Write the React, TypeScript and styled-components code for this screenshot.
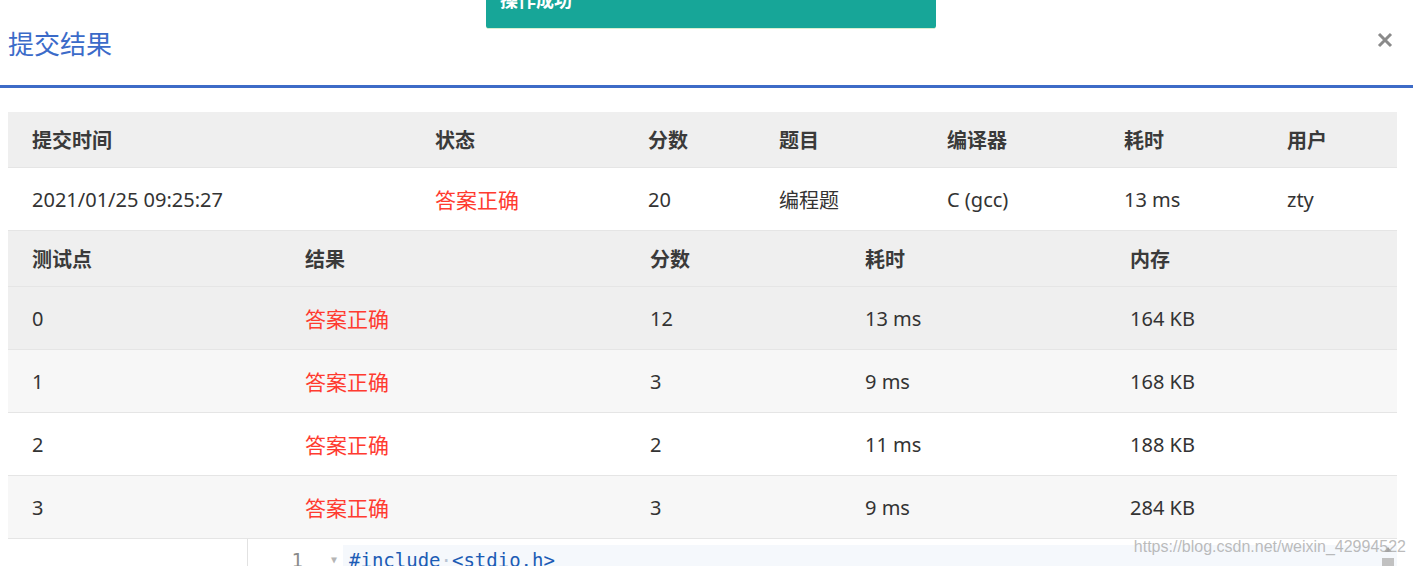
import React from "react";
import styled, { createGlobalStyle } from "styled-components";

const Global = createGlobalStyle`
  html, body { margin: 0; padding: 0; background: #fff; overflow: hidden; }
  body { font-family: "Noto Sans", "Noto Sans CJK SC", sans-serif; color: #333; }
  * { box-sizing: border-box; }
`;

const Page = styled.div`
  position: relative;
  width: 1413px;
  height: 566px;
  overflow: hidden;
`;

const Header = styled.header`
  height: 88px;
  border-bottom: 3px solid #3d6bc7;
  display: flex;
  align-items: center;
  justify-content: space-between;
  padding: 0 20px 0 8px;
`;

const Title = styled.h1`
  margin: 0;
  font-family: "Noto Sans CJK SC", sans-serif;
  font-size: 26px;
  font-weight: 400;
  color: #3b6bc9;
`;

const Close = styled.button`
  border: 0;
  background: none;
  padding: 0;
  margin-bottom: 6px;
  display: flex;
  cursor: pointer;
`;

const Toast = styled.div`
  position: absolute;
  top: 0;
  left: 486px;
  width: 450px;
  height: 29px;
  background: #17a698;
  border-bottom: 1px solid #d8efcf;
  border-radius: 0 0 3px 3px;
  display: flex;
  align-items: flex-end;
  padding: 0 0 20px 14px;
  color: #fff;
  font-family: "Noto Sans CJK SC", sans-serif;
  font-weight: 700;
  font-size: 18px;
  line-height: 18px;
`;

const Content = styled.main`
  padding: 24px 16px 0 8px;
`;

const Row = styled.div<{ $cols: string; $bg?: string; $head?: boolean }>`
  display: grid;
  grid-template-columns: ${(p) => p.$cols};
  height: ${(p) => (p.$head ? "56px" : "63px")};
  background: ${(p) => p.$bg ?? "#fff"};
  border-bottom: 1px solid #e5e5e5;
  font-size: 20px;
  font-weight: ${(p) => (p.$head ? 700 : 400)};
  color: ${(p) => (p.$head ? "#3a3a3a" : "#333")};
`;

const Cell = styled.div<{ $ok?: boolean }>`
  display: flex;
  align-items: center;
  padding-left: 24px;
  white-space: nowrap;
  color: ${(p) => (p.$ok ? "#ff3b30" : "inherit")};
  font-size: ${(p) => (p.$ok ? "21px" : "inherit")};
`;

const Editor = styled.div`
  position: relative;
  margin-left: 239px;
  border-left: 1px solid #e2e2e2;
  padding-top: 6px;
  height: 60px;
  display: flex;
`;

const Gutter = styled.div`
  width: 95px;
  display: flex;
  align-items: flex-start;
  padding-top: 2px;
  font-family: "DejaVu Sans Mono", monospace;
  font-size: 19px;
  line-height: 26px;
  color: #8a8a8a;
`;

const LineNo = styled.span`
  width: 55px;
  text-align: right;
`;

const Fold = styled.span`
  margin-left: 28px;
  font-size: 10px;
  color: #b5b5b5;
`;

const CodeArea = styled.div`
  flex: 1;
  background: #f5f8fc;
  padding: 2px 0 0 6px;
  font-family: "DejaVu Sans Mono", monospace;
  font-size: 19px;
  line-height: 26px;
  color: #1c5cb5;
  white-space: pre;
`;

const Dot = styled.span`
  color: #b8c4d4;
`;

const Scrollbar = styled.div`
  position: absolute;
  right: 0;
  top: 0;
  width: 18px;
  height: 100%;
  display: flex;
  flex-direction: column;
  align-items: center;
  padding-top: 8px;
  gap: 6px;
`;

const ScrollUp = styled.span`
  width: 0;
  height: 0;
  border-left: 4px solid transparent;
  border-right: 4px solid transparent;
  border-bottom: 5px solid #a3a3a3;
`;

const Thumb = styled.span`
  width: 12px;
  flex: 1;
  background: #c1c1c1;
`;

const Watermark = styled.div`
  position: absolute;
  right: 7px;
  top: 537px;
  font-family: "Liberation Sans", Arial, sans-serif;
  font-size: 16px;
  line-height: 20px;
  color: rgba(175, 175, 175, 0.85);
  pointer-events: none;
`;

const COLS1 = "403px 213px 131px 168px 177px 163px 1fr";
const COLS2 = "273px 345px 215px 265px 1fr";

const cases = [
  { id: "0", score: "12", time: "13 ms", mem: "164 KB", bg: "#efefef" },
  { id: "1", score: "3", time: "9 ms", mem: "168 KB", bg: "#f7f7f7" },
  { id: "2", score: "2", time: "11 ms", mem: "188 KB", bg: "#ffffff" },
  { id: "3", score: "3", time: "9 ms", mem: "284 KB", bg: "#f7f7f7" },
];

export default function App() {
  return (
    <Page>
      <Global />
      <Header>
        <Title>提交结果</Title>
        <Close aria-label="close">
          <svg width="16" height="16" viewBox="0 0 16 16">
            <path d="M2 2 L14 14 M14 2 L2 14" stroke="#8a8a8a" strokeWidth="3" />
          </svg>
        </Close>
      </Header>
      <Toast>操作成功</Toast>
      <Content>
        <Row $cols={COLS1} $head $bg="#efefef">
          <Cell>提交时间</Cell>
          <Cell>状态</Cell>
          <Cell>分数</Cell>
          <Cell>题目</Cell>
          <Cell>编译器</Cell>
          <Cell>耗时</Cell>
          <Cell>用户</Cell>
        </Row>
        <Row $cols={COLS1}>
          <Cell>2021/01/25 09:25:27</Cell>
          <Cell $ok>答案正确</Cell>
          <Cell>20</Cell>
          <Cell>编程题</Cell>
          <Cell>C (gcc)</Cell>
          <Cell>13 ms</Cell>
          <Cell>zty</Cell>
        </Row>
        <Row $cols={COLS2} $head $bg="#efefef">
          <Cell>测试点</Cell>
          <Cell>结果</Cell>
          <Cell>分数</Cell>
          <Cell>耗时</Cell>
          <Cell>内存</Cell>
        </Row>
        {cases.map((c) => (
          <Row key={c.id} $cols={COLS2} $bg={c.bg}>
            <Cell>{c.id}</Cell>
            <Cell $ok>答案正确</Cell>
            <Cell>{c.score}</Cell>
            <Cell>{c.time}</Cell>
            <Cell>{c.mem}</Cell>
          </Row>
        ))}
        <Editor>
          <Gutter>
            <LineNo>1</LineNo>
            <Fold>▼</Fold>
          </Gutter>
          <CodeArea>
            #include<Dot>·</Dot>&lt;stdio.h&gt;
          </CodeArea>
          <Scrollbar>
            <ScrollUp />
            <Thumb />
          </Scrollbar>
        </Editor>
      </Content>
      <Watermark>https://blog.csdn.net/weixin_42994522</Watermark>
    </Page>
  );
}
